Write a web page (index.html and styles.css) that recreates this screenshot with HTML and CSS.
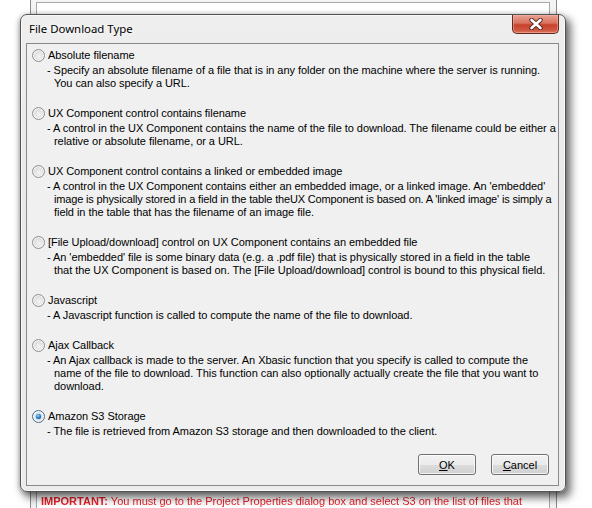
FILE: index.html
```html
<!DOCTYPE html>
<html>
<head>
<meta charset="utf-8">
<link rel="stylesheet" href="styles.css">
</head>
<body>
<div class="desktop">
  <div class="bgwin">
    <div class="bgpanel">
      <p class="bgnote"><b>IMPORTANT:</b> You must go to the Project Properties dialog box and select S3 on the list of files that</p>
    </div>
  </div>

  <div class="dialog">
    <div class="titlebar">
      <span class="title">File Download Type</span>
      <button class="close" aria-label="Close">
        <svg width="14" height="12" viewBox="0 0 14 12"><path d="M2.5 2 L11.5 10 M11.5 2 L2.5 10" fill="none" stroke="#5a2a24" stroke-width="4.4" stroke-linecap="round"/><path d="M2.5 2 L11.5 10 M11.5 2 L2.5 10" fill="none" stroke="#ffffff" stroke-width="2.6" stroke-linecap="round"/></svg>
      </button>
    </div>
    <div class="client">
      <div class="options">
        <div class="opt">
          <div class="label"><span class="radio"></span>Absolute filename</div>
          <div class="desc">- Specify an absolute filename of a file that is in any folder on the machine where the server is running.<br>You can also specify a URL.</div>
        </div>
        <div class="opt">
          <div class="label"><span class="radio"></span>UX Component control contains filename</div>
          <div class="desc">- A control in the UX Component contains the name of the file to download. The filename could be either a<br>relative or absolute filename, or a URL.</div>
        </div>
        <div class="opt">
          <div class="label"><span class="radio"></span>UX Component control contains a linked or embedded image</div>
          <div class="desc">- A control in the UX Component contains either an embedded image, or a linked image. An 'embedded'<br><span class="tight">image is physically stored in a field in the table theUX Component is based on. A 'linked image' is simply a</span><br>field in the table that has the filename of an image file.</div>
        </div>
        <div class="opt">
          <div class="label"><span class="radio"></span>[File Upload/download] control on UX Component contains an embedded file</div>
          <div class="desc">- An 'embedded' file is some binary data (e.g. a .pdf file) that is physically stored in a field in the table<br>that the UX Component is based on. The [File Upload/download] control is bound to this physical field.</div>
        </div>
        <div class="opt">
          <div class="label"><span class="radio"></span>Javascript</div>
          <div class="desc">- A Javascript function is called to compute the name of the file to download.</div>
        </div>
        <div class="opt">
          <div class="label"><span class="radio"></span>Ajax Callback</div>
          <div class="desc">- An Ajax callback is made to the server. An Xbasic function that you specify is called to compute the<br>name of the file to download. This function can also optionally actually create the file that you want to<br>download.</div>
        </div>
        <div class="opt">
          <div class="label"><span class="radio checked"></span>Amazon S3 Storage</div>
          <div class="desc">- The file is retrieved from Amazon S3 storage and then downloaded to the client.</div>
        </div>
      </div>
      <div class="buttons">
        <button class="btn"><u>O</u>K</button>
        <button class="btn"><u>C</u>ancel</button>
      </div>
    </div>
  </div>
</div>
</body>
</html>
```

FILE: styles.css
```css
* { box-sizing: border-box; }
html, body { margin: 0; padding: 0; }
body {
  width: 592px;
  height: 508px;
  overflow: hidden;
  background: #ffffff;
  font-family: "Liberation Sans", Arial, sans-serif;
}
.desktop {
  position: relative;
  width: 592px;
  height: 508px;
  overflow: hidden;
}

/* background window */
.bgwin {
  position: absolute;
  left: 30px;
  top: -20px;
  width: 527px;
  height: 560px;
  border-left: 1px solid #8c8c8c;
  border-right: 1px solid #8c8c8c;
  background: #f4f4f4;
  padding: 0 6px 0 5px;
}
.bgpanel {
  margin-top: 22px;
  height: 540px;
  background: #ffffff;
  border: 1px solid #a8a8a8;
  padding: 492px 0 0 4px;
}
.bgnote {
  margin: 0;
  font-family: "Liberation Sans", Arial, sans-serif;
  font-size: 11px;
  color: #e8202a;
  white-space: nowrap;
  filter: blur(0.6px);
}

/* dialog */
.dialog {
  position: absolute;
  left: 20px;
  top: 14px;
  width: 546px;
  height: 478px;
  border: 1px solid #505458;
  border-radius: 7px;
  background: linear-gradient(#eeeeee, #e9e9e9 40%, #ececec);
  box-shadow: 4px 5px 9px 1px rgba(0, 0, 0, 0.55), -1px 1px 5px rgba(0, 0, 0, 0.25), inset 0 0 0 1px rgba(255, 255, 255, 0.7);
  display: flex;
  flex-direction: column;
}
.titlebar {
  height: 28px;
  display: flex;
  align-items: flex-start;
  justify-content: space-between;
  padding: 0 6px 0 8px;
}
.title {
  font-family: "Noto Sans", "Open Sans", sans-serif;
  font-size: 11.4px;
  line-height: 28px;
  color: #000;
  text-shadow: 0 0 6px #fff, 0 0 8px #fff;
}
.close {
  width: 47px;
  height: 19px;
  margin: 0;
  padding: 0;
  border: 1px solid #5d2a26;
  border-top: none;
  border-radius: 0 0 5px 5px;
  background: linear-gradient(#e8a493 0%, #d8725f 45%, #c8412c 55%, #cf5a45 85%, #e07a60 100%);
  box-shadow: inset 0 0 0 1px rgba(255, 190, 170, 0.45);
  display: flex;
  align-items: center;
  justify-content: center;
}
.close svg { display: block; }

.client {
  margin: 0 6px 0 5px;
  height: 443px;
  border: 1px solid #8a8a8a;
  background: #f0f0f0;
  padding: 5px 5px 9px 5px;
  display: flex;
  flex-direction: column;
}
.options {
  display: flex;
  flex-direction: column;
  gap: 17px;
}
.opt {
  font-size: 11px;
  letter-spacing: -0.05px;
  line-height: 13px;
  color: #000;
  white-space: nowrap;
}
.tight { letter-spacing: -0.16px; }
.label {
  display: flex;
  align-items: center;
  height: 13px;
}
.radio {
  width: 13px;
  height: 13px;
  border-radius: 50%;
  border: 1px solid #8e8f8f;
  background: radial-gradient(circle at 55% 60%, #f4f4f4 0%, #e2e2e2 45%, #cfcfcf 100%);
  margin-right: 3px;
  flex: none;
  position: relative;
  box-shadow: inset 0 0 0 1px #f8f8f8;
}
.radio.checked {
  border-color: #4f6d8a;
  background: radial-gradient(circle at 50% 50%, #e8eef4 0%, #d8e2ec 100%);
}
.radio.checked::after {
  content: "";
  position: absolute;
  left: 3px;
  top: 3px;
  width: 5px;
  height: 5px;
  border-radius: 50%;
  background: radial-gradient(circle at 40% 35%, #9ed6ff 0%, #2a82c8 45%, #0b3f78 100%);
  box-shadow: 0 0 1px #1a4f88;
}
.desc {
  margin-top: 2px;
  padding-left: 22px;
  text-indent: -7px;
}

.buttons {
  margin-top: 16px;
  display: flex;
  justify-content: flex-end;
  gap: 15px;
  padding-right: 4px;
}
.btn {
  width: 58px;
  height: 21px;
  margin: 0;
  padding: 0;
  font-family: "Liberation Sans", Arial, sans-serif;
  font-size: 11px;
  color: #000;
  border: 1px solid #707070;
  border-radius: 3px;
  background: linear-gradient(#f2f2f2 0%, #ebebeb 50%, #dddddd 51%, #cfcfcf 100%);
  box-shadow: inset 0 0 0 1px rgba(255, 255, 255, 0.75);
}
```
